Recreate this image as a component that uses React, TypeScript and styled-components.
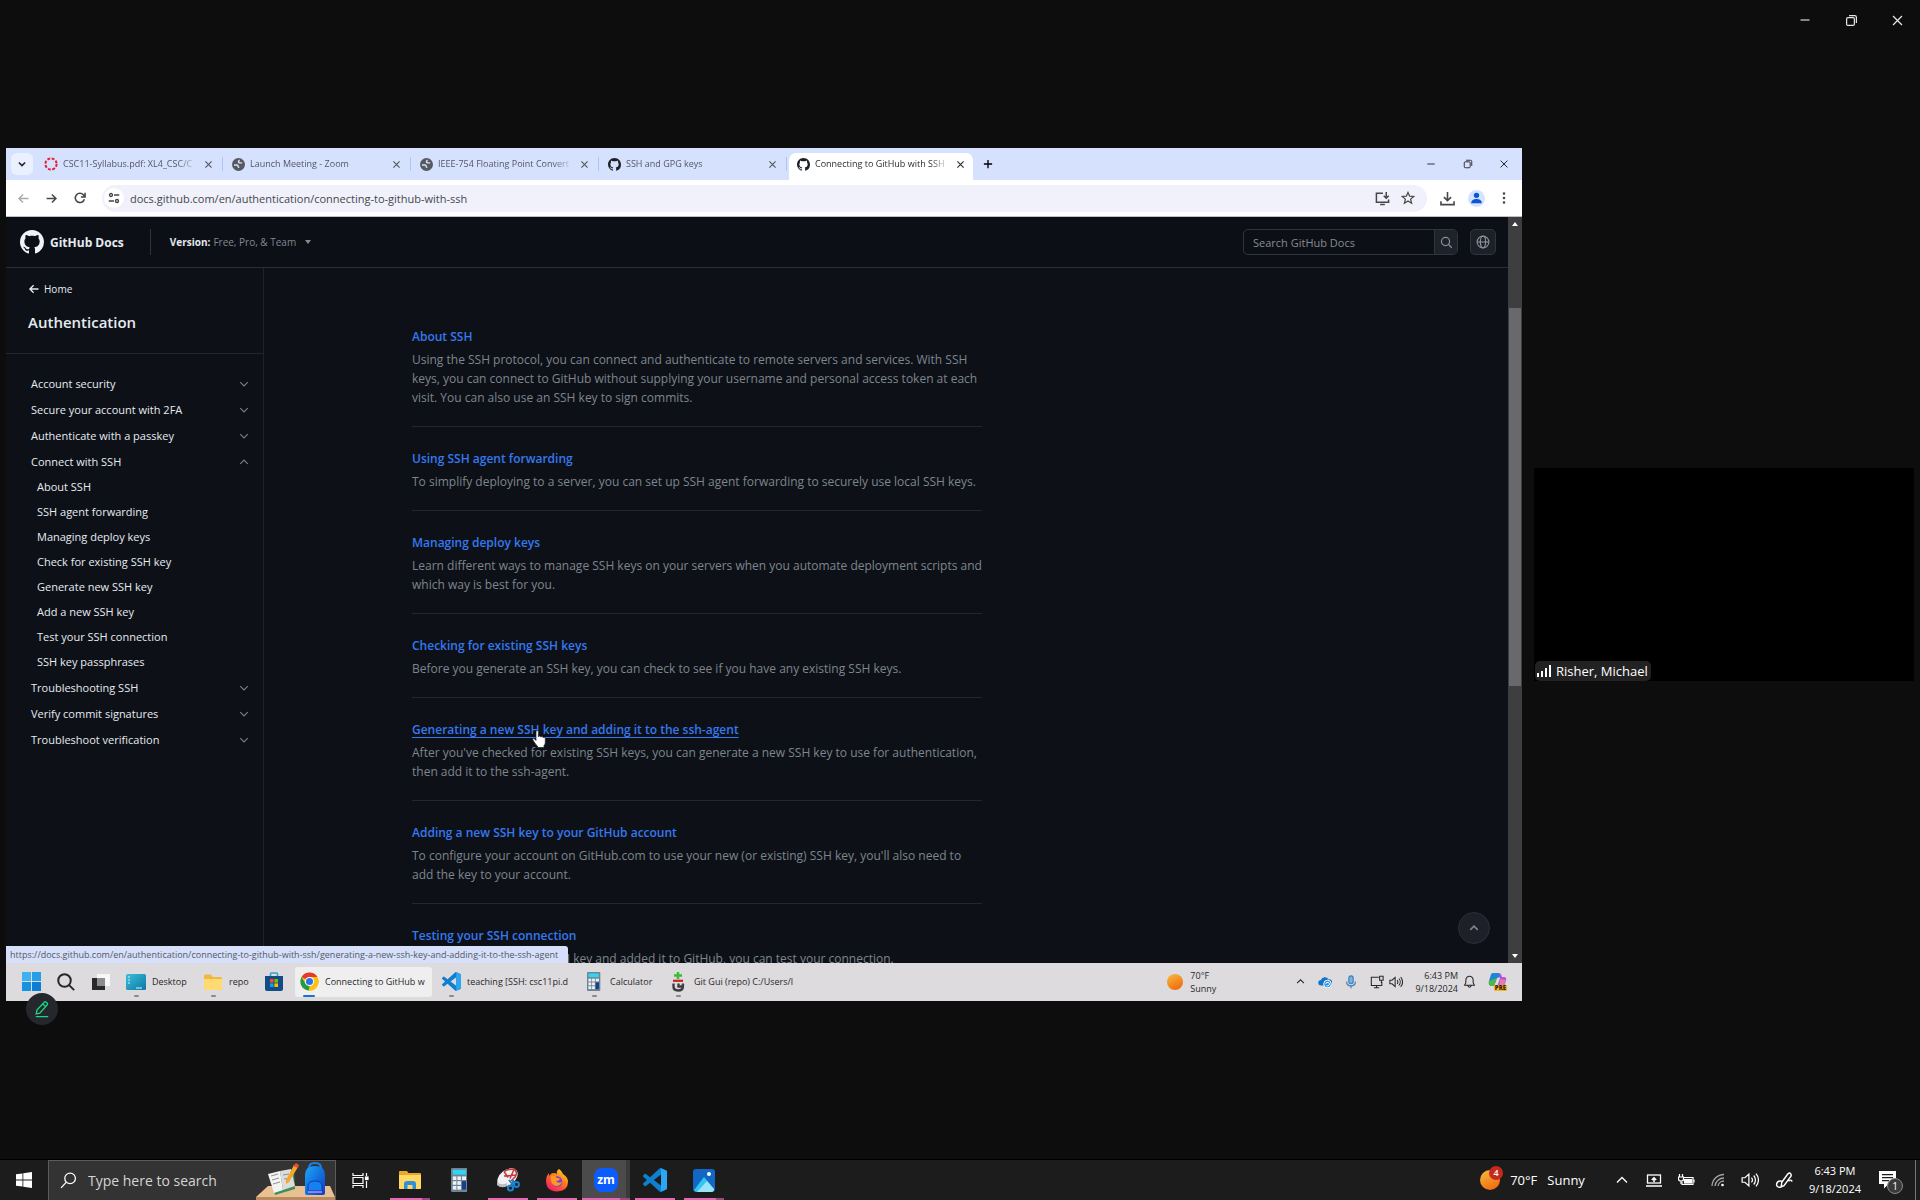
import React from "react";
import styled, { createGlobalStyle, css } from "styled-components";

const GlobalStyle = createGlobalStyle`
  * { box-sizing: border-box; }
  html, body, #root { height: 100%; }
  body {
    margin: 0;
    background: #0d0d0d;
    font-family: "Open Sans", "Noto Sans", sans-serif;
    overflow: hidden;
  }
  button, input { font: inherit; color: inherit; border: 0; padding: 0; margin: 0; background: none; outline: 0; }
  ul { list-style: none; margin: 0; padding: 0; }
  a { color: inherit; text-decoration: none; }
  svg { display: block; flex: none; }
  h1, h2, p { margin: 0; }
`;

/* ---------- Icons ---------- */

type StrokeProps = { size?: number; w?: number; box?: number; children: React.ReactNode };
const Stroke = ({ size = 16, w = 1.5, box = 16, children }: StrokeProps) => (
  <svg width={size} height={size} viewBox={`0 0 ${box} ${box}`} fill="none" stroke="currentColor" strokeWidth={w} aria-hidden="true">
    {children}
  </svg>
);

const ChevronDown = ({ size = 12, w = 1.5 }) => <Stroke size={size} w={w}><path d="M3 5.500l5 5 5-5" /></Stroke>;
const ChevronUp = ({ size = 12, w = 1.5 }) => <Stroke size={size} w={w}><path d="M3 10.500l5-5 5 5" /></Stroke>;
const Cross = ({ size = 10, w = 2 }) => <Stroke size={size} w={w}><path d="M2.500 2.500l11 11M13.500 2.500l-11 11" /></Stroke>;
const Minimize = ({ size = 12, w = 1.5 }) => <Stroke size={size} w={w}><path d="M2 8h12" /></Stroke>;
const Restore = ({ size = 12, w = 1.5 }) => (
  <Stroke size={size} w={w}><rect x="2" y="4.500" width="9.500" height="9.500" rx="1.500" /><path d="M5 2h7a2 2 0 0 1 2 2v7" /></Stroke>
);
const Arrow = ({ size = 14, flip = false, w = 1.8 }) => (
  <Stroke size={size} w={w}>{flip ? <path d="M14 8H2.500M7.500 3l-5 5 5 5" /> : <path d="M2 8h11.500M8.500 3l5 5-5 5" />}</Stroke>
);
const Reload = () => <Stroke size={14} w={1.8}><path d="M13 9.500A5.300 5.300 0 1 1 12 4.500L13.500 6.500M13.800 2v4.800H9" /></Stroke>;
const Tune = () => (
  <Stroke size={12} w={1.8}><circle cx="4" cy="4" r="2" /><path d="M8 4h7M1 12h7" /><circle cx="12" cy="12" r="2" /></Stroke>
);
const Install = () => (
  <Stroke size={15} w={1.6}><path d="M8.500 2.500h-7v9.500h13V9M5.500 14.500h5M12 1v6.500M9.300 5l2.700 2.700L14.700 5" /></Stroke>
);
const Star = () => <Stroke size={14} w={1.4}><path d="M8 1.600l1.900 4.300 4.700.4-3.600 3 1.100 4.600L8 11.500l-4.100 2.400L5 9.300l-3.600-3 4.700-.4z" /></Stroke>;
const Download = () => <Stroke size={15} w={1.7}><path d="M8 1v9M4.200 6.500L8 10.300l3.800-3.800M1 11v3.500h14V11" /></Stroke>;
const Dots = () => (
  <svg width="14" height="14" viewBox="0 0 14 14" fill="#474747"><circle cx="7" cy="2.500" r="1.300" /><circle cx="7" cy="7" r="1.300" /><circle cx="7" cy="11.500" r="1.300" /></svg>
);
const Plus = () => <Stroke size={12} w={1.8}><path d="M8 2.500v11M2.500 8h11" /></Stroke>;
const Profile = () => (
  <svg width="17" height="17" viewBox="0 0 16 16"><circle cx="8" cy="8" r="8" fill="#d3e3fd" /><circle cx="8" cy="5" r="2.500" fill="#0b57d0" /><path d="M3 12.500c0-3 2.500-4 5-4s5 1 5 4z" fill="#0b57d0" /></svg>
);
const GithubMark = ({ size = 14, color = "#1c2028" }) => (
  <svg width={size} height={size} viewBox="0 0 16 16" fill={color} aria-hidden="true">
    <path d="M8 0C3.58 0 0 3.58 0 8c0 3.54 2.29 6.53 5.47 7.59.4.07.55-.17.55-.38 0-.19-.01-.82-.01-1.49-2.01.37-2.53-.49-2.69-.94-.09-.23-.48-.94-.82-1.13-.28-.15-.68-.52-.01-.53.63-.01 1.08.58 1.23.82.72 1.21 1.87.87 2.33.66.07-.52.28-.87.51-1.07-1.78-.2-3.64-.89-3.64-3.95 0-.87.31-1.59.82-2.15-.08-.2-.36-1.02.08-2.12 0 0 .67-.21 2.2.82.64-.18 1.32-.27 2-.27.68 0 1.36.09 2 .27 1.53-1.04 2.2-.82 2.2-.82.44 1.1.16 1.92.08 2.12.51.56.82 1.27.82 2.15 0 3.07-1.87 3.75-3.65 3.95.29.25.54.73.54 1.48 0 1.07-.01 1.93-.01 2.2 0 .21.15.46.55.38A8.013 8.013 0 0016 8c0-4.42-3.58-8-8-8z" />
  </svg>
);
const Canvas = () => (
  <svg width="14" height="14" viewBox="0 0 14 14"><circle cx="7" cy="7" r="5.600" fill="none" stroke="#e4202e" strokeWidth="2" strokeDasharray="2.900 1.500" /></svg>
);
const GlobeSolid = () => (
  <svg width="13" height="13" viewBox="0 0 16 16"><circle cx="8" cy="8" r="8" fill="#56595f" /><path d="M2.500 8.500h3.500q1.500 0 1.500 1.500t1.500 1.500M12.500 6H9.500Q8 6 8 4.500T9.500 2.800" fill="none" stroke="#d6e2fd" strokeWidth="1.800" /></svg>
);
const Magnifier = ({ size = 14, w = 1.5, flip = false }) => (
  <Stroke size={size} w={w}>
    {flip ? <><circle cx="9.500" cy="6" r="5" /><path d="M6 9.500L1 15" /></> : <><circle cx="6.800" cy="6.800" r="5" /><path d="M10.500 10.500l4 4" /></>}
  </Stroke>
);
const GlobeLine = () => (
  <Stroke size={14} w={1.3}><circle cx="8" cy="8" r="6.700" /><ellipse cx="8" cy="8" rx="3" ry="6.700" /><path d="M1.500 8h13" /></Stroke>
);
const VsCode = ({ size = 19 }) => (
  <svg width={size} height={size} viewBox="0 0 24 24">
    <path fill="#0f7fd0" d="M23.15 2.587L18.21.21a1.494 1.494 0 0 0-1.705.29l-9.46 8.63-4.12-3.128a.999.999 0 0 0-1.276.057L.327 7.261A1 1 0 0 0 .326 8.74L3.899 12 .326 15.26a1 1 0 0 0 .001 1.479L1.65 17.94a.999.999 0 0 0 1.276.057l4.12-3.128 9.46 8.63a1.492 1.492 0 0 0 1.704.29l4.942-2.377A1.5 1.5 0 0 0 24 20.06V3.939a1.5 1.5 0 0 0-.85-1.352zm-5.146 14.861L10.826 12l7.178-5.448v10.896z" />
    <path fill="#2ba6f3" d="M18 .3l5.200 2.300q.8.5.8 1.300V20q0 .9-.8 1.400L18 23.800z" />
  </svg>
);
const Calc = ({ h = 20 }) => (
  <svg width={h * 0.7} height={h} viewBox="0 0 14 20">
    <rect width="14" height="20" rx="1" fill="#6d8396" /><rect x="1.500" y="1.500" width="11" height="4" fill="#35d3f2" />
    {[7, 11, 15].map((y) => [1.5, 5.3].map((x) => <rect key={`${x}${y}`} x={x} y={y} width="3" height="3" fill="#eef2f5" />))}
    <rect x="9.200" y="7" width="3.300" height="3" fill="#eef2f5" /><rect x="9.200" y="11" width="3.300" height="7" fill="#153f8c" />
  </svg>
);
const Win11 = () => (
  <svg width="19" height="19" viewBox="0 0 19 19"><rect width="9" height="9" fill="#3cb3f0" /><rect x="10" width="9" height="9" fill="#25a0e8" /><rect y="10" width="9" height="9" fill="#1593e0" /><rect x="10" y="10" width="9" height="9" fill="#0a7fd4" /></svg>
);
const DesktopsIcon = () => (
  <svg width="18" height="18" viewBox="0 0 18 18"><rect x="5" y="1" width="13" height="12" fill="#f7f7f7" /><rect x="0" y="5" width="13" height="12" fill="#29292b" /><rect x="5" y="5" width="8" height="8" fill="#8c8c8e" /></svg>
);
const DesktopApp = () => (
  <svg width="20" height="16" viewBox="0 0 20 16"><defs><linearGradient id="dk" x1="0" y1="0" x2="1" y2="1"><stop offset="0" stopColor="#3bc0d6" /><stop offset="1" stopColor="#0b77a8" /></linearGradient></defs><rect width="20" height="16" rx="1.500" fill="url(#dk)" /><path d="M2 3h2M2 6h2M2 9h2M10 14h6" stroke="#d8f4fa" strokeWidth="1.200" /></svg>
);
const Folder = () => (
  <svg width="18" height="16" viewBox="0 0 18 16"><path d="M0 2q0-1.500 1.500-1.500h5L9 3H16.500q1.500 0 1.500 1.500V14.500q0 1.500-1.500 1.500h-15Q0 16 0 14.500z" fill="#f0b93c" /><path d="M0 5h18v9.500q0 1.500-1.500 1.500h-15Q0 16 0 14.500z" fill="#ffda73" /></svg>
);
const Store = () => (
  <svg width="18" height="19" viewBox="0 0 18 19"><path d="M5.500 4V2q0-1 1-1h5q1 0 1 1v2" fill="none" stroke="#2ea0dc" strokeWidth="1.600" /><path d="M0 4h18v13q0 2-2 2H2q-2 0-2-2z" fill="#134b86" /><rect x="5" y="7" width="3.600" height="3.600" fill="#f25022" /><rect x="9.400" y="7" width="3.600" height="3.600" fill="#7fba00" /><rect x="5" y="11.400" width="3.600" height="3.600" fill="#00a4ef" /><rect x="9.400" y="11.400" width="3.600" height="3.600" fill="#ffb900" /></svg>
);
const Chrome = () => (
  <svg width="19" height="19" viewBox="0 0 48 48"><circle cx="24" cy="24" r="23" fill="#fbc116" /><path d="M24 24L4.100 12.500A23 23 0 0 1 43.900 12.500H24z" fill="#e33b2e" /><path d="M4.100 12.500L14 29.800l10 5.700L22 47A23 23 0 0 1 4.100 12.500z" fill="#229a4b" /><path d="M24 12.500h19.900A23 23 0 0 1 22 47l12-17z" fill="#fbc116" /><circle cx="24" cy="24" r="11.500" fill="#fff" /><circle cx="24" cy="24" r="9" fill="#2a72e8" /></svg>
);
const GitGui = () => (
  <svg width="14" height="20" viewBox="0 0 14 20" fill="none"><path d="M7 0v7M3 3.500h8" stroke="#31c231" strokeWidth="2.500" /><path d="M2 8.800h10" stroke="#d12020" strokeWidth="2.200" /><path d="M2.500 11.500v3q0 4 4.700 4t4.700-4v-3M7.500 11.500v3h4" stroke="#3e3e40" strokeWidth="2.400" /></svg>
);
const Sun = ({ size = 16 }) => (
  <svg width={size} height={size} viewBox="0 0 16 16"><defs><linearGradient id="sun" x1=".2" y1="0" x2=".7" y2="1"><stop offset="0" stopColor="#f6b73a" /><stop offset="1" stopColor="#f2680f" /></linearGradient></defs><circle cx="8" cy="8" r="8" fill="url(#sun)" /></svg>
);
const Cloud = () => (
  <svg width="14" height="12" viewBox="0 0 14 12"><path d="M3 9.500a2.700 2.700 0 0 1 0-5.400A4 4 0 0 1 10.500 3.500 3 3 0 0 1 12 9.500z" fill="#1173c7" /><circle cx="9.500" cy="8" r="3.800" fill="#2a8be0" stroke="#fff" /><path d="M7.800 8.200a1.800 1.800 0 1 1 .6 1.300" fill="none" stroke="#fff" /></svg>
);
const MicColor = styled.span`
  color: #3a7fb8;
`;
const Mic = () => <MicColor><Stroke size={14} w={1.3}><rect x="5.500" y="1" width="5" height="9" rx="2.500" fill="#7fb2dc" /><path d="M3 7.500q0 5 5 5t5-5M8 12.500V15" /></Stroke></MicColor>;
const Network = () => <Stroke size={14} w={1.2}><path d="M10 2.500H1.500V12h12V8M7.500 12v2.500M4.500 14.500h6M11 1.500h4V6h-4zM13 6v3" /></Stroke>;
const Speaker = ({ size = 14, w = 1.2 }) => <Stroke size={size} w={w}><path d="M1 6h2.500L7 2.800v10.400L3.500 10H1zM9.300 5.800a3.500 3.500 0 0 1 0 4.400M11.300 4a6 6 0 0 1 0 8M13.300 2.300a8.500 8.500 0 0 1 0 11.400" /></Stroke>;
const Bell = () => <Stroke size={13} w={1.3}><path d="M8 1.500a4.500 4.500 0 0 1 4.500 4.500v3.500L14 12.500H2l1.500-3V6A4.500 4.500 0 0 1 8 1.500zM6 13a2 2 0 0 0 4 0" /></Stroke>;
const Copilot = () => (
  <svg width="19" height="19" viewBox="0 0 19 19"><path d="M5 1h6l2 4-4 1-3 8H3Q0 13 1 9l1.500-5Q3 1 5 1z" fill="#1d86d8" /><path d="M1 9l8-3-3 8H3Q0 13 1 9z" fill="#4fb848" /><path d="M11 1q2 0 3 4h2q3 0 2 4l-1.500 4Q15.500 15 13 15H9l3-9z" fill="#b455d6" /><path d="M12 7l6 1-1.500 5-5 1z" fill="#e879b4" /></svg>
);
const Pencil = () => (
  <svg width="16" height="18" viewBox="0 0 18 20" fill="none" stroke="#16d982" strokeWidth="1.500"><path d="M2.500 15.500l.8-4.200L11.800 2.200q.8-.8 1.700 0l1.400 1.400q.8.9 0 1.700L6.500 14.600zM10 4.300l3 3M2 18.500h14" /></svg>
);
const Hand = () => (
  <svg width="14" height="18" viewBox="0 0 14 18"><path d="M4 1.800q0-1.300 1.200-1.300t1.200 1.300V6.800q.2-.7 1.200-.7t1.200 1q.2-.7 1.200-.6t1.100 1.200q.3-.5 1.100-.4T13.300 8.600V12.500q0 2-1.300 3v2H5.500V16Q3.500 14.500 2.500 12.500L.8 10Q.3 8.900 1.200 8.600t1.900.8l.9 1z" fill="#fff" stroke="#15181f" strokeWidth=".7" /></svg>
);
const Win10 = () => (
  <svg width="16" height="16" viewBox="0 0 16 16" fill="#fff"><path d="M0 2.300l6.500-.9v6.200H0zM7.300 1.300L16 0v7.600H7.300zM0 8.400h6.500v6.200L0 13.700zM7.300 8.400H16V16l-8.700-1.300z" /></svg>
);
const StudyArt = () => (
  <svg width="79" height="38" viewBox="0 0 79 38"><defs><linearGradient id="bag" x1="0" y1="0" x2="1" y2="1"><stop offset="0" stopColor="#1ba6fa" /><stop offset="1" stopColor="#0a3fc4" /></linearGradient></defs><path d="M12 24H74l5 11H0z" fill="#e8c092" /><path d="M0 35h79v3H0z" fill="#b98a5e" /><path d="M14 13l12-4 12-1 1 19-20 6z" fill="#3b8f5a" /><path d="M12 12l12-3 3 19-9 3z" fill="#f4f4f2" /><path d="M24 9l11-2 4 17-12 4z" fill="#dcdcda" /><path d="M15 14l7-2M16 18l7-2M17 22l7-2M27 13l6-1M28 17l7-1" stroke="#8d8f93" /><path d="M38 3l4 2-9 15-3 2v-4z" fill="#f5a52a" /><path d="M37 4l3-3 3 2-1 3z" fill="#e0502e" /><path d="M53 6q0-5 6-5t6 5" fill="none" stroke="#1d7fe8" strokeWidth="2" /><path d="M49 31V13q0-9 10-9t10 9v18q0 2-2 2H51q-2 0-2-2z" fill="url(#bag)" /><path d="M52 29v-5q0-5 7-5t7 5v5z" fill="#1680f2" stroke="#0a3bb0" /><path d="M52 30h14" stroke="#c58bf0" strokeWidth="1.500" /></svg>
);
const TaskView = () => (
  <svg width="17" height="17" viewBox="0 0 17 17" fill="none" stroke="#fff" strokeWidth="1.200"><path d="M1 1v2.500h10V1M1 16v-2.500h10V16M1 5.500h10v6H1zM14.500 1v3M14.500 9v7" /><rect x="13.500" y="5" width="2.500" height="2.500" fill="#fff" /></svg>
);
const Explorer = () => (
  <svg width="22" height="18" viewBox="0 0 22 18"><path d="M0 1q0-1 1-1h7l1.500 2H21q1 0 1 1v14q0 1-1 1H1q-1 0-1-1z" fill="#e6a92c" /><path d="M0 4h22v13q0 1-1 1H1q-1 0-1-1z" fill="#ffd866" /><path d="M5 18v-5q0-3 3-3h6q3 0 3 3v5h-3.500v-4h-5v4z" fill="#2f8fd8" /></svg>
);
const Snip = () => (
  <svg width="26" height="24" viewBox="0 0 26 24"><ellipse cx="12.500" cy="9.500" rx="11.500" ry="7.500" transform="rotate(-38 12.500 9.500)" fill="#f1f1f3" /><path d="M9 3.500Q14 .5 19 1.500q4 2 1.500 7L16 13M9 3.500l4 6M19 1.500l-4 9M9 8l12-1" fill="none" stroke="#c43a3a" strokeWidth="1.500" /><path d="M2 14q4 4 10 1v3q-6 3-10-1z" fill="#b9bcc2" /><g fill="none" stroke="#1b84d0" strokeWidth="2"><path d="M14 12l4 5M18 12v5" /><circle cx="15.500" cy="20" r="2.600" /><circle cx="21.500" cy="16.500" r="2.400" /></g></svg>
);
const Firefox = () => (
  <svg width="24" height="24" viewBox="0 0 24 24"><defs><linearGradient id="ff" x1=".9" y1="0" x2=".2" y2="1"><stop offset="0" stopColor="#ffe226" /><stop offset=".45" stopColor="#ff7a1a" /><stop offset="1" stopColor="#f0156d" /></linearGradient></defs><path d="M14 1q3 2 4 5 5 3 5 8 0 9-11 9.500Q1 23 1 13q0-5 3-8v3q2-3 4-3 3 0 4 1-1-3 2-5z" fill="url(#ff)" /><circle cx="12" cy="13.500" r="5.200" fill="#7a3fe0" /><path d="M6 8q4-1 6 2 3 0 3 1-1 2-4 2 2 3 6 1-2 4-6 4-6-1-5-10z" fill="#ff9a1f" /></svg>
);
const Photos = () => (
  <svg width="22" height="23" viewBox="0 0 22 23"><rect width="22" height="23" rx="3" fill="#1267c4" /><path d="M1 21L11 8l10 12q0 3-3 3H4q-2 0-3-2z" fill="#35c3f3" /><path d="M4 23L14 12l7 8q0 3-3 3z" fill="#9be5fb" /><circle cx="16" cy="5" r="2" fill="#fff" /></svg>
);
const Present = () => <Stroke size={16} w={1.3}><rect x="1.500" y="3" width="13" height="8" /><path d="M0 14h16M8 10V6.500M5.800 8L8 5.800 10.200 8" strokeWidth="1.600" /></Stroke>;
const Battery = () => (
  <svg width="17" height="14" viewBox="0 0 17 14" fill="none" stroke="#fff" strokeWidth="1.200"><path d="M6 4.500h9v7H4V9" /><rect x="6.500" y="6.500" width="7" height="3.500" fill="#fff" /><path d="M16 6.500v3M1.500 1v3M4.500 1v3M.5 4h5v2q0 2-2.500 2T.5 6zM3 8v3" /></svg>
);
const Wifi = () => (
  <svg width="14" height="14" viewBox="0 0 14 14" fill="none" stroke="#a5a5a5" strokeWidth="1.300"><path d="M1 13A12 12 0 0 1 13 1.500M4 13a9 9 0 0 1 9-8M7 13a6 6 0 0 1 6-5" /><circle cx="11.500" cy="12" r="1.300" fill="#fff" stroke="none" /></svg>
);
const Pen = () => <Stroke size={18} w={1.3}><path d="M6 10l5.500-7.500q1.500-1.500 2.500 0t-.5 3L8 13l-2.500 1zM6 9q-4-.5-4.500 2.500T5 14.500M12 9q3-2 3 .5" /></Stroke>;
const Note = () => (
  <svg width="17" height="18" viewBox="0 0 17 18"><path d="M0 0h17v13H9.500L5 17.500V13H0z" fill="#fff" /><path d="M3 3.700h11M3 6.700h11M3 9.700h7" stroke="#1c1c1c" strokeWidth="1.200" /></svg>
);
const Signal = () => (
  <svg width="15" height="12" viewBox="0 0 15 12" fill="#fff"><path d="M0 8h2v4H0zM4 6h2v6H4zM8 3h2v9H8zM12 0h2v12h-2z" /></svg>
);

/* ---------- Meeting shell ---------- */

const Screen = styled.div`
  display: flex;
  flex-direction: column;
  height: 100vh;
`;
const TitleBar = styled.header`
  display: flex;
  justify-content: flex-end;
  height: 40px;
  color: #e6e6e6;
`;
const TitleButton = styled.button`
  display: grid;
  place-items: center;
  width: 46px;
`;
const Meeting = styled.main`
  flex: 1;
  min-height: 0;
  display: grid;
  grid-template-columns: minmax(0, 1fr) 380px;
  gap: 12px;
  align-items: center;
  padding: 0 6px 50px;
`;
const Share = styled.section`
  position: relative;
`;
const AnnotateButton = styled.button`
  position: absolute;
  left: 20px;
  bottom: -24px;
  width: 32px;
  height: 32px;
  border-radius: 50%;
  background: #25272c;
  display: grid;
  place-items: center;
`;
const Participant = styled.section`
  aspect-ratio: 16 / 9;
  background: #000;
  display: flex;
  align-items: flex-end;
  padding-left: 1px;
`;
const NameTag = styled.div`
  display: flex;
  align-items: center;
  gap: 4px;
  height: 20px;
  padding: 0 3px 0 2px;
  border-radius: 5px;
  background: #222;
  color: #fff;
  font-size: 13px;
`;

/* ---------- Shared browser ---------- */

const Desktop = styled.div`
  aspect-ratio: 16 / 9;
  display: flex;
  flex-direction: column;
  overflow: hidden;
  background: #0d1117;
`;
const TabStrip = styled.div`
  display: flex;
  align-items: center;
  height: 32px;
  flex: none;
  background: #d6e2fd;
  padding: 0 0 0 5px;
`;
const TabSearch = styled.button`
  display: grid;
  place-items: center;
  width: 22px;
  height: 22px;
  margin-right: 2px;
  border-radius: 6px;
  background: #eaf0fe;
  color: #202124;
`;
const Tab = styled.div<{ $active?: boolean }>`
  display: flex;
  align-items: center;
  gap: 5px;
  width: 188px;
  height: 14px;
  padding: 0 9px;
  color: #53575f;
  border-right: 1px solid #a9c7fa;
  ${(p) =>
    p.$active &&
    css`
      align-self: flex-end;
      width: 184px;
      height: 27px;
      margin: 0 2px;
      padding: 0 8px 5px;
      border: 0;
      border-radius: 7px 7px 0 0;
      background: #fff;
      color: #2b2c30;
    `}
`;
const TabTitle = styled.span`
  flex: 1;
  min-width: 0;
  overflow: hidden;
  white-space: nowrap;
  font-size: 9px;
  line-height: 14px;
  mask-image: linear-gradient(90deg, #000 85%, transparent);
`;
const IconButton = styled.button<{ $w?: number }>`
  display: grid;
  place-items: center;
  flex: none;
  width: ${(p) => p.$w ?? 14}px;
  height: 24px;
`;
const StripEnd = styled.div`
  margin-left: auto;
  display: flex;
  color: #27282c;
`;
const Toolbar = styled.div`
  display: flex;
  align-items: center;
  height: 37px;
  flex: none;
  padding: 0 4px 0 3px;
  background: #fff;
  border-bottom: 1px solid #bfc0c4;
  color: #474747;
`;
const Omnibox = styled.label`
  flex: 1;
  display: flex;
  align-items: center;
  height: 27px;
  margin: 0 6px 0 8px;
  padding: 0 7px 0 2px;
  border-radius: 14px;
  background: #f0f1fb;
`;
const SiteChip = styled.span`
  display: grid;
  place-items: center;
  width: 20px;
  height: 20px;
  margin-right: 6px;
  border-radius: 50%;
  background: #fff;
`;
const UrlInput = styled.input`
  flex: 1;
  min-width: 0;
  font-size: 11px;
  color: #45474c;
`;
const Muted = styled.span`
  color: #a9abaf;
`;

/* ---------- Docs page ---------- */

const Viewport = styled.div`
  position: relative;
  flex: 1;
  min-height: 0;
  display: flex;
`;
const Docs = styled.div`
  flex: 1;
  min-width: 0;
  display: flex;
  flex-direction: column;
`;
const DocsHeader = styled.header`
  display: flex;
  align-items: center;
  flex: none;
  height: 51px;
  padding: 0 12px 0 14px;
  border-bottom: 1px solid #2b3038;
  background: #0d0f16;
`;
const Brand = styled.a`
  display: flex;
  align-items: center;
  gap: 6px;
  padding-right: 26px;
  border-right: 1px solid #30343c;
  height: 26px;
  font-size: 12px;
  font-weight: 700;
  color: #e6ebf1;
`;
const VersionButton = styled.button`
  display: flex;
  align-items: center;
  gap: 3px;
  padding-left: 19px;
  font-size: 10px;
  color: #82878f;
  b { color: #e2e7ed; font-weight: 700; }
`;
const Caret = styled.span`
  margin-left: 6px;
  border: 3px solid transparent;
  border-top: 4px solid #868b93;
  border-bottom: 0;
`;
const SearchForm = styled.form`
  display: flex;
  margin-left: auto;
  width: 215px;
  height: 26px;
  border: 1px solid #30353d;
  border-radius: 5px;
  overflow: hidden;
  color: #8b919a;
`;
const SearchInput = styled.input`
  flex: 1;
  min-width: 0;
  padding-left: 9px;
  font-size: 11px;
  &::placeholder { color: #858b94; opacity: 1; }
`;
const SearchSubmit = styled.button`
  display: grid;
  place-items: center;
  width: 23px;
  border-left: 1px solid #30353d;
  background: #1e222a;
`;
const LangButton = styled.button`
  display: grid;
  place-items: center;
  width: 26px;
  height: 26px;
  margin-left: 12px;
  border: 1px solid #30353d;
  border-radius: 5px;
  background: #1c2028;
  color: #8b919a;
`;
const DocsBody = styled.div`
  flex: 1;
  min-height: 0;
  display: flex;
  overflow: hidden;
`;
const Sidebar = styled.nav`
  flex: none;
  width: 258px;
  border-right: 1px solid #1f232a;
  color: #e6ebf1;
`;
const SidebarHead = styled.div`
  height: 86px;
  padding: 13px 22px 0;
  border-bottom: 1px solid #22262d;
`;
const HomeLink = styled.a`
  display: flex;
  align-items: center;
  gap: 4px;
  font-size: 10px;
  line-height: 16px;
`;
const SidebarTitle = styled.h1`
  margin-top: 13px;
  font-size: 15px;
  line-height: 24px;
  font-weight: 600;
`;
const NavList = styled.ul`
  display: flex;
  flex-direction: column;
  gap: 1px;
  padding: 17px 13px 0 25px;
`;
const NavToggle = styled.button`
  display: flex;
  align-items: center;
  justify-content: space-between;
  width: 100%;
  height: 25px;
  font-size: 11px;
  text-align: left;
  svg { color: #7b818a; }
`;
const SubLink = styled.a`
  display: block;
  padding-left: 6px;
  font-size: 11px;
  line-height: 25px;
`;
const Article = styled.div`
  flex: 1;
  min-width: 0;
  padding: 37px 24px 0 148px;
`;
const Entry = styled.article`
  max-width: 570px;
  padding: 21px 0 19px;
  & + & { border-top: 1px solid #23272f; }
`;
const EntryTitle = styled.h2`
  margin-bottom: 2px;
  font-size: 12px;
  line-height: 22px;
  font-weight: 600;
`;
const EntryLink = styled.a<{ $hovered?: boolean }>`
  color: #3578f0;
  text-decoration: ${(p) => (p.$hovered ? "underline" : "none")};
  text-underline-offset: 3px;
`;
const EntryText = styled.p`
  font-size: 12px;
  line-height: 19px;
  color: #7f858e;
`;
const Scrollbar = styled.div`
  flex: none;
  width: 14px;
  display: flex;
  flex-direction: column;
  align-items: center;
  justify-content: space-between;
  padding: 5px 0;
  background: #3e3e41;
`;
const ScrollArrow = styled.span<{ $down?: boolean }>`
  border: 3px solid transparent;
  ${(p) => (p.$down ? "border-top: 4px solid #fff; border-bottom: 0;" : "border-bottom: 4px solid #fff; border-top: 0;")}
`;
const ScrollTrack = styled.div`
  flex: 1;
  align-self: stretch;
  display: grid;
  grid-template-rows: 82fr 377fr 268fr;
  padding: 0 1px;
`;
const ScrollThumb = styled.div`
  grid-row: 2;
  background: #69686d;
`;
const StatusBubble = styled.div`
  position: absolute;
  left: 0;
  bottom: 0;
  height: 17px;
  padding: 0 10px 0 4px;
  border-radius: 0 3px 0 0;
  background: #d6e0fb;
  color: #55585f;
  font-size: 9px;
  line-height: 17px;
  white-space: nowrap;
`;
const TopButton = styled.button`
  position: absolute;
  right: 32px;
  bottom: 19px;
  width: 32px;
  height: 32px;
  border-radius: 50%;
  border: 1px solid #2a2e36;
  background: #1d2028;
  color: #80868f;
  display: grid;
  place-items: center;
`;
const Pointer = styled.span`
  position: absolute;
  left: 526px;
  top: 513px;
`;

/* ---------- Shared taskbar (light) ---------- */

const LightBar = styled.footer`
  display: flex;
  align-items: center;
  gap: 5px;
  height: 38px;
  flex: none;
  padding: 0 15px 0 11px;
  background: #dddbdd;
  color: #27272a;
  font-size: 9px;
`;
const Task = styled.button<{ $w?: number; $active?: boolean; $running?: boolean }>`
  position: relative;
  flex: none;
  display: flex;
  align-items: center;
  gap: 6px;
  width: ${(p) => p.$w ?? 30}px;
  height: 30px;
  padding: 0 4px;
  border-radius: 3px;
  background: ${(p) => (p.$active ? "#f0eff0" : "transparent")};
  ${(p) =>
    (p.$active || p.$running) &&
    css`
      &::after {
        content: "";
        position: absolute;
        bottom: 0;
        left: ${p.$active ? 8 : 12}px;
        width: ${p.$active ? 12 : 5}px;
        height: 2px;
        border-radius: 1px;
        background: ${p.$active ? "#1a72cf" : "#8a898b"};
      }
    `}
`;
const TaskIcon = styled.span`
  flex: none;
  width: 20px;
  display: grid;
  place-items: center;
`;
const TaskLabel = styled.span`
  white-space: nowrap;
`;
const Tray = styled.div`
  margin-left: auto;
  display: flex;
  align-items: center;
  gap: 12px;
`;
const Lines = styled.div<{ $align?: string }>`
  display: flex;
  flex-direction: column;
  line-height: 13px;
  font-size: 9px;
  text-align: ${(p) => p.$align ?? "left"};
`;
const LightWeather = styled.button`
  display: flex;
  align-items: center;
  gap: 7px;
  margin-right: 67px;
  text-align: left;
`;
const TrayPair = styled.span`
  display: flex;
  align-items: center;
  gap: 5px;
`;
const CopilotButton = styled.button`
  position: relative;
`;
const PreBadge = styled.span`
  position: absolute;
  right: 0;
  bottom: 0;
  padding: 0 1px;
  border-radius: 1px;
  background: #f5b62b;
  color: #3b2600;
  font-size: 6px;
  line-height: 6px;
  font-weight: 800;
`;

/* ---------- Host taskbar (dark) ---------- */

const DarkBar = styled.footer`
  flex: none;
  display: flex;
  align-items: stretch;
  height: 41px;
  border-top: 1px solid #000;
  background: #1c1c1c;
  color: #fff;
`;
const StartButton = styled.button`
  display: grid;
  place-items: center;
  width: 48px;
`;
const HostSearch = styled.label`
  display: flex;
  align-items: center;
  width: 288px;
  padding-left: 11px;
  border: 1px solid #5b5b5b;
  border-bottom: 0;
  background: #333;
`;
const HostSearchInput = styled.input`
  flex: 1;
  min-width: 0;
  margin-left: 11px;
  font-size: 14px;
  &::placeholder { color: #d4d4d4; opacity: 1; }
`;
const HostApps = styled.div`
  display: flex;
  gap: 1px;
  margin-left: 2px;
`;
const HostApp = styled.button<{ $state?: "active" | "running" | "stacked" }>`
  position: relative;
  display: grid;
  place-items: center;
  width: 48px;
  background: ${(p) => (p.$state === "active" ? "linear-gradient(90deg, #4b4b4b 44px, #3a3a3a 44px)" : "none")};
  &::after {
    content: "";
    position: absolute;
    bottom: 0;
    left: ${(p) => (p.$state === "active" ? 0 : 4)}px;
    right: ${(p) => (p.$state === "active" ? 0 : 4)}px;
    height: 2px;
    background: ${(p) =>
      !p.$state ? "none" : p.$state === "running" ? "#e667b4" : "linear-gradient(90deg, #e667b4 80%, #9c4a7e 80%)"};
  }
`;
const ZoomTile = styled.span`
  display: grid;
  place-items: center;
  width: 24px;
  height: 24px;
  border-radius: 8px;
  background: #0b5cff;
  font-size: 12px;
  line-height: 20px;
  font-weight: 700;
`;
const HostTray = styled.div`
  margin-left: auto;
  display: flex;
  align-items: center;
  gap: 16px;
`;
const HostWeather = styled.button`
  position: relative;
  display: flex;
  align-items: center;
  gap: 10px;
  margin-right: 13px;
  font-size: 13px;
`;
const AlertBadge = styled.span`
  position: absolute;
  left: 9px;
  top: -4px;
  width: 14px;
  height: 14px;
  border-radius: 50%;
  background: #c42b1c;
  font-size: 9px;
  line-height: 14px;
  font-weight: 600;
`;
const HostClock = styled.div`
  font-size: 11px;
  line-height: 18px;
  text-align: center;
`;
const NoteButton = styled.button`
  position: relative;
  margin: 0 3px 0 2px;
`;
const CountBadge = styled.span`
  position: absolute;
  left: 8px;
  top: 7px;
  width: 16px;
  height: 16px;
  border: 1px solid #8a8a8a;
  border-radius: 50%;
  background: #3a3a3a;
  font-size: 10px;
  line-height: 14px;
`;
const ShowDesktop = styled.button`
  width: 5px;
  align-self: stretch;
  border-left: 1px solid #777;
`;

/* ---------- Data ---------- */

const tabs = [
  { title: "CSC11-Syllabus.pdf: XL4_CSC/C", icon: <Canvas /> },
  { title: "Launch Meeting - Zoom", icon: <GlobeSolid /> },
  { title: "IEEE-754 Floating Point Convert", icon: <GlobeSolid /> },
  { title: "SSH and GPG keys", icon: <GithubMark size={13} /> },
  { title: "Connecting to GitHub with SSH", icon: <GithubMark size={13} />, active: true },
];

const nav: { label: string; children?: string[] }[] = [
  { label: "Account security" },
  { label: "Secure your account with 2FA" },
  { label: "Authenticate with a passkey" },
  {
    label: "Connect with SSH",
    children: [
      "About SSH", "SSH agent forwarding", "Managing deploy keys", "Check for existing SSH key",
      "Generate new SSH key", "Add a new SSH key", "Test your SSH connection", "SSH key passphrases",
    ],
  },
  { label: "Troubleshooting SSH" },
  { label: "Verify commit signatures" },
  { label: "Troubleshoot verification" },
];

const entries = [
  { title: "About SSH", text: "Using the SSH protocol, you can connect and authenticate to remote servers and services. With SSH keys, you can connect to GitHub without supplying your username and personal access token at each visit. You can also use an SSH key to sign commits." },
  { title: "Using SSH agent forwarding", text: "To simplify deploying to a server, you can set up SSH agent forwarding to securely use local SSH keys." },
  { title: "Managing deploy keys", text: "Learn different ways to manage SSH keys on your servers when you automate deployment scripts and which way is best for you." },
  { title: "Checking for existing SSH keys", text: "Before you generate an SSH key, you can check to see if you have any existing SSH keys." },
  { title: "Generating a new SSH key and adding it to the ssh-agent", text: "After you've checked for existing SSH keys, you can generate a new SSH key to use for authentication, then add it to the ssh-agent.", hovered: true },
  { title: "Adding a new SSH key to your GitHub account", text: "To configure your account on GitHub.com to use your new (or existing) SSH key, you'll also need to add the key to your account." },
  { title: "Testing your SSH connection", text: "After you've set up your SSH key and added it to GitHub, you can test your connection." },
];

const tasks = [
  { icon: <Win11 />, name: "Start" },
  { icon: <Magnifier size={20} w={1.6} />, name: "Search" },
  { icon: <DesktopsIcon />, name: "Task view" },
  { icon: <DesktopApp />, label: "Desktop", w: 72, running: true },
  { icon: <Folder />, label: "repo", w: 56, running: true },
  { icon: <Store />, name: "Store" },
  { icon: <Chrome />, label: "Connecting to GitHub w", w: 137, active: true },
  { icon: <VsCode />, label: "teaching [SSH: csc11pi.d", w: 138, running: true },
  { icon: <Calc h={19} />, label: "Calculator", w: 79, running: true },
  { icon: <GitGui />, label: "Git Gui (repo) C:/Users/l", w: 138, running: true },
];

/* ---------- Sections ---------- */

const BrowserChrome = () => (
  <>
    <TabStrip>
      <TabSearch aria-label="Search tabs"><ChevronDown size={10} w={2.5} /></TabSearch>
      {tabs.map((t) => (
        <Tab key={t.title} $active={t.active}>
          {t.icon}
          <TabTitle>{t.title}</TabTitle>
          <IconButton $w={10} aria-label="Close tab"><Cross size={9} /></IconButton>
        </Tab>
      ))}
      <IconButton $w={26} aria-label="New tab"><Plus /></IconButton>
      <StripEnd>
        <IconButton $w={36} aria-label="Minimize"><Minimize size={10} /></IconButton>
        <IconButton $w={37} aria-label="Restore"><Restore size={10} /></IconButton>
        <IconButton $w={36} aria-label="Close"><Cross size={10} w={1.6} /></IconButton>
      </StripEnd>
    </TabStrip>
    <Toolbar>
      <IconButton $w={28} aria-label="Back"><Muted><Arrow flip size={13} /></Muted></IconButton>
      <IconButton $w={29} aria-label="Forward"><Arrow size={13} /></IconButton>
      <IconButton $w={28} aria-label="Reload"><Reload /></IconButton>
      <Omnibox>
        <SiteChip><Tune /></SiteChip>
        <UrlInput aria-label="Address" defaultValue="docs.github.com/en/authentication/connecting-to-github-with-ssh" />
        <IconButton $w={25} aria-label="Install"><Install /></IconButton>
        <IconButton $w={25} aria-label="Bookmark"><Star /></IconButton>
      </Omnibox>
      <IconButton $w={29} aria-label="Downloads"><Download /></IconButton>
      <IconButton $w={28} aria-label="Profile"><Profile /></IconButton>
      <IconButton $w={28} aria-label="Menu"><Dots /></IconButton>
    </Toolbar>
  </>
);

const DocsPage = () => (
  <Viewport>
    <Docs>
      <DocsHeader>
        <Brand href="#"><GithubMark size={24} color="#f0f3f6" />GitHub Docs</Brand>
        <VersionButton><b>Version:</b>Free, Pro, &amp; Team<Caret /></VersionButton>
        <SearchForm>
          <SearchInput aria-label="Search GitHub Docs" placeholder="Search GitHub Docs" />
          <SearchSubmit type="button" aria-label="Search"><Magnifier size={13} /></SearchSubmit>
        </SearchForm>
        <LangButton aria-label="Language"><GlobeLine /></LangButton>
      </DocsHeader>
      <DocsBody>
        <Sidebar>
          <SidebarHead>
            <HomeLink href="#"><Arrow flip size={12} />Home</HomeLink>
            <SidebarTitle>Authentication</SidebarTitle>
          </SidebarHead>
          <NavList>
            {nav.map((n) => (
              <li key={n.label}>
                <NavToggle>{n.label}{n.children ? <ChevronUp /> : <ChevronDown />}</NavToggle>
                {n.children && (
                  <ul>{n.children.map((c) => <li key={c}><SubLink href="#">{c}</SubLink></li>)}</ul>
                )}
              </li>
            ))}
          </NavList>
        </Sidebar>
        <Article>
          {entries.map((e) => (
            <Entry key={e.title}>
              <EntryTitle><EntryLink href="#" $hovered={e.hovered}>{e.title}</EntryLink></EntryTitle>
              <EntryText>{e.text}</EntryText>
            </Entry>
          ))}
        </Article>
      </DocsBody>
    </Docs>
    <Scrollbar>
      <ScrollArrow />
      <ScrollTrack><ScrollThumb /></ScrollTrack>
      <ScrollArrow $down />
    </Scrollbar>
    <StatusBubble>https://docs.github.com/en/authentication/connecting-to-github-with-ssh/generating-a-new-ssh-key-and-adding-it-to-the-ssh-agent</StatusBubble>
    <TopButton aria-label="Scroll to top"><ChevronUp size={12} w={2} /></TopButton>
    <Pointer><Hand /></Pointer>
  </Viewport>
);

const SharedTaskbar = () => (
  <LightBar>
    {tasks.map((t) => (
      <Task key={t.name ?? t.label} aria-label={t.name} $w={t.w} $active={t.active} $running={t.running}>
        <TaskIcon>{t.icon}</TaskIcon>
        {t.label && <TaskLabel>{t.label}</TaskLabel>}
      </Task>
    ))}
    <Tray>
      <LightWeather><Sun /><Lines><span>70°F</span><span>Sunny</span></Lines></LightWeather>
      <ChevronUp size={11} />
      <Cloud />
      <Mic />
      <TrayPair><Network /><Speaker /></TrayPair>
      <TrayPair><Lines $align="right"><span>6:43 PM</span><span>9/18/2024</span></Lines><Bell /></TrayPair>
      <CopilotButton aria-label="Copilot"><Copilot /><PreBadge>PRE</PreBadge></CopilotButton>
    </Tray>
  </LightBar>
);

const HostTaskbar = () => (
  <DarkBar>
    <StartButton aria-label="Start"><Win10 /></StartButton>
    <HostSearch>
      <Magnifier size={17} w={1.2} flip />
      <HostSearchInput aria-label="Type here to search" placeholder="Type here to search" />
      <StudyArt />
    </HostSearch>
    <HostApp aria-label="Task view"><TaskView /></HostApp>
    <HostApps>
      <HostApp aria-label="File Explorer" $state="stacked"><Explorer /></HostApp>
      <HostApp aria-label="Calculator"><Calc h={24} /></HostApp>
      <HostApp aria-label="Snipping Tool" $state="running"><Snip /></HostApp>
      <HostApp aria-label="Firefox" $state="running"><Firefox /></HostApp>
      <HostApp aria-label="Zoom" $state="active"><ZoomTile>zm</ZoomTile></HostApp>
      <HostApp aria-label="Visual Studio Code" $state="running"><VsCode size={24} /></HostApp>
      <HostApp aria-label="Photos" $state="stacked"><Photos /></HostApp>
    </HostApps>
    <HostTray>
      <HostWeather><Sun size={20} /><AlertBadge>4</AlertBadge><span>70°F</span><span>Sunny</span></HostWeather>
      <ChevronUp size={16} w={1.3} />
      <Present />
      <Battery />
      <Wifi />
      <Speaker size={18} w={1.1} />
      <Pen />
      <HostClock>6:43 PM<br />9/18/2024</HostClock>
      <NoteButton aria-label="Notifications"><Note /><CountBadge>1</CountBadge></NoteButton>
      <ShowDesktop aria-label="Show desktop" />
    </HostTray>
  </DarkBar>
);

export default function App() {
  return (
    <>
      <GlobalStyle />
      <Screen>
        <TitleBar>
          <TitleButton aria-label="Minimize"><Minimize size={12} /></TitleButton>
          <TitleButton aria-label="Restore"><Restore size={13} /></TitleButton>
          <TitleButton aria-label="Close"><Cross size={13} w={1.5} /></TitleButton>
        </TitleBar>
        <Meeting>
          <Share>
            <Desktop>
              <BrowserChrome />
              <DocsPage />
              <SharedTaskbar />
            </Desktop>
            <AnnotateButton aria-label="Annotate"><Pencil /></AnnotateButton>
          </Share>
          <Participant>
            <NameTag><Signal />Risher, Michael</NameTag>
          </Participant>
        </Meeting>
        <HostTaskbar />
      </Screen>
    </>
  );
}
